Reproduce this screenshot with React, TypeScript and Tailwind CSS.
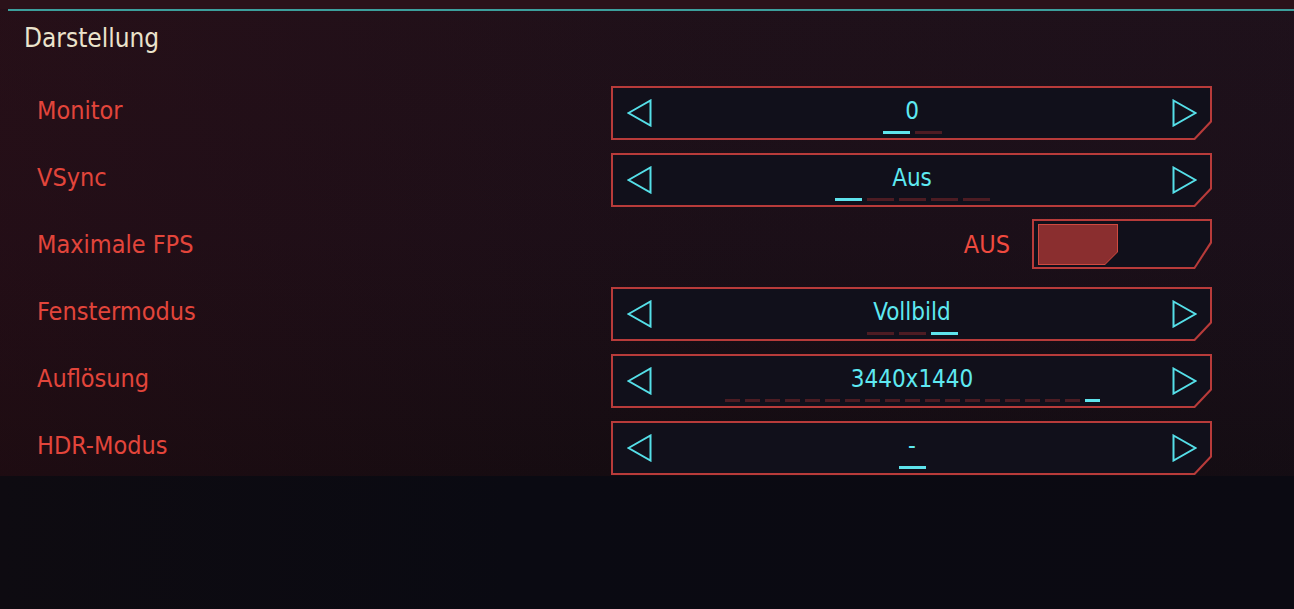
import React from 'react';

type Row =
  | { kind: 'select'; label: string; value: string; dashes: boolean[]; small?: boolean }
  | { kind: 'toggle'; label: string; value: string };

const rows: Row[] = [
  { kind: 'select', label: 'Monitor', value: '0', dashes: [true, false] },
  { kind: 'select', label: 'VSync', value: 'Aus', dashes: [true, false, false, false, false] },
  { kind: 'toggle', label: 'Maximale FPS', value: 'AUS' },
  { kind: 'select', label: 'Fenstermodus', value: 'Vollbild', dashes: [false, false, true] },
  {
    kind: 'select',
    label: 'Auflösung',
    value: '3440x1440',
    dashes: Array.from({ length: 19 }, (_, i) => i === 18),
    small: true,
  },
  { kind: 'select', label: 'HDR-Modus', value: '-', dashes: [true] },
];

function Arrow({ dir }: { dir: 'left' | 'right' }) {
  const points = dir === 'left' ? '1.5,14 23.5,1.5 23.5,26.5' : '1.5,1.5 23.5,14 1.5,26.5';
  return (
    <svg width="25" height="28" viewBox="0 0 25 28" className="shrink-0">
      <polygon points={points} fill="none" stroke="#55dfe8" strokeWidth="2" strokeLinejoin="miter" />
    </svg>
  );
}

function Selector({ value, dashes, small }: { value: string; dashes: boolean[]; small?: boolean }) {
  return (
    <div className="w-[601px] h-[54px] bg-[#b83b3a] p-[2px] [clip-path:polygon(0_0,100%_0,100%_calc(100%_-_18px),calc(100%_-_17px)_100%,0_100%)]">
      <div className="h-full w-full bg-[#11101b] flex items-center pl-[14px] pr-[13px] [clip-path:polygon(0_0,100%_0,100%_calc(100%_-_17px),calc(100%_-_16px)_100%,0_100%)]">
        <Arrow dir="left" />
        <div className="flex-1 self-stretch flex flex-col items-center pt-[10px]">
          <span className="text-[24px] leading-[26px] text-[#5ee9f1]">{value}</span>
          <div className={`flex mt-[7px] ${small ? 'gap-[5px]' : 'gap-[5px]'}`}>
            {dashes.map((on, i) => (
              <div
                key={i}
                className={`h-[3px] ${small ? 'w-[15px]' : 'w-[27px]'} ${on ? 'bg-[#5ee3ec]' : 'bg-[#4d1c23]'}`}
              />
            ))}
          </div>
        </div>
        <Arrow dir="right" />
      </div>
    </div>
  );
}

function Toggle({ value }: { value: string }) {
  return (
    <div className="w-[601px] h-[54px] flex items-start justify-end gap-[22px]">
      <span className="text-[25px] leading-[50px] text-[#ef4a3f]">{value}</span>
      <div className="w-[180px] h-[50px] -mt-[1px] bg-[#b83b3a] p-[2px] [clip-path:polygon(0_0,100%_0,100%_calc(100%_-_26px),calc(100%_-_17px)_100%,0_100%)]">
        <div className="h-full w-full bg-[#11101b] pl-[4px] pt-[3px] [clip-path:polygon(0_0,100%_0,100%_calc(100%_-_25px),calc(100%_-_16px)_100%,0_100%)]">
          <div className="w-[80px] h-[41px] bg-[#d04a40] p-[1px] [clip-path:polygon(0_0,100%_0,100%_calc(100%_-_13px),calc(100%_-_13px)_100%,0_100%)]">
            <div className="h-full w-full bg-[#8a2e2f] [clip-path:polygon(0_0,100%_0,100%_calc(100%_-_12px),calc(100%_-_12px)_100%,0_100%)]" />
          </div>
        </div>
      </div>
    </div>
  );
}

export default function App() {
  return (
    <div className="w-[1294px] h-[609px] overflow-hidden flex flex-col bg-[linear-gradient(90deg,#0e0b11,#0a0a12_40%,#0b0a12)] font-['DejaVu_Sans_Condensed','DejaVu_Sans',sans-serif]">
      <div className="h-[476px] flex flex-col bg-[linear-gradient(90deg,rgba(55,12,20,0.3),rgba(30,10,18,0.05)_55%,rgba(28,18,34,0.15)),linear-gradient(180deg,#1f111a,#1b0f18_50%,#130c11)]">
        <div className="h-[9px] bg-[#2b1219]" />
        <div className="h-[2px] ml-[8px] bg-[#3c9f9c]" />
        <div className="pl-[24px] pt-[12px]">
          <h1 className="text-[26px] leading-[30px] text-[#ebe3cc]">Darstellung</h1>
        </div>
        <div className="mt-[33px] flex flex-col gap-[13px]">
          {rows.map((row) => (
            <div key={row.label} className="flex items-center h-[54px]">
              <div className="w-[611px] pl-[37px] -mt-[4px] text-[25px] leading-[30px] text-[#e2453b]">
                {row.label}
              </div>
              {row.kind === 'select' ? (
                <Selector value={row.value} dashes={row.dashes} small={row.small} />
              ) : (
                <Toggle value={row.value} />
              )}
            </div>
          ))}
        </div>
      </div>
    </div>
  );
}
